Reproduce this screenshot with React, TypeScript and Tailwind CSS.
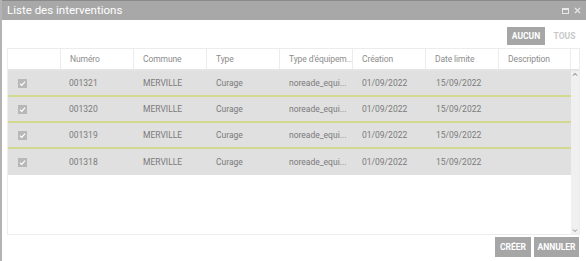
import { X } from "lucide-react";

const columns = [
  { key: "num", title: "Numéro", width: "w-[73px]" },
  { key: "commune", title: "Commune", width: "w-[73px]" },
  { key: "type", title: "Type", width: "w-[73px]" },
  { key: "equip", title: "Type d'équipem...", width: "w-[73px]" },
  { key: "creation", title: "Création", width: "w-[73px]" },
  { key: "limite", title: "Date limite", width: "w-[73px]" },
  { key: "desc", title: "Description", width: "w-[72px]" }
];

const rows = [
  { num: "001321", commune: "MERVILLE", type: "Curage", equip: "noreade_equi...", creation: "01/09/2022", limite: "15/09/2022", desc: "" },
  { num: "001320", commune: "MERVILLE", type: "Curage", equip: "noreade_equi...", creation: "01/09/2022", limite: "15/09/2022", desc: "" },
  { num: "001319", commune: "MERVILLE", type: "Curage", equip: "noreade_equi...", creation: "01/09/2022", limite: "15/09/2022", desc: "" },
  { num: "001318", commune: "MERVILLE", type: "Curage", equip: "noreade_equi...", creation: "01/09/2022", limite: "15/09/2022", desc: "" }
];

function CheckBox() {
  return (
    <span className="flex h-[9px] w-[9px] items-center justify-center bg-[#b8b8b8]">
      <svg width="7" height="7" viewBox="0 0 7 7" fill="none">
        <path d="M1 3.8 L2.8 5.4 L6 1.6" stroke="#fff" strokeWidth="1.2" />
      </svg>
    </span>
  );
}

export default function App() {
  return (
    <div className="flex h-[261px] w-[586px] flex-col border-l-2 border-[#b3b3b3] bg-white font-['Roboto','Liberation_Sans',sans-serif]">
      <div className="flex h-[20px] items-center justify-between border-t border-[#8a8a8a] bg-[#a8a8a8] pl-[5px] pr-[4px]">
        <span className="text-[11.5px] text-white">Liste des interventions</span>
        <div className="flex items-center gap-[4px] text-[#e8e8e8]">
          <span className="h-[6px] w-[7px] border border-t-2 border-[#e8e8e8]" />
          <X size={9} strokeWidth={3} />
        </div>
      </div>

      <div className="flex justify-end gap-[3px] pr-[5px] pt-[7px]">
        <button className="h-[18px] w-[38px] bg-[#a6a6a6] text-[8.5px] font-bold text-white">AUCUN</button>
        <button className="h-[18px] w-[33px] text-[8.5px] font-bold text-[#c8c8c8]">TOUS</button>
      </div>

      <div className="ml-[5px] mr-[6px] mt-[3px] flex h-[187px] flex-col border border-[#ececec]">
        <div className="flex h-[22px] border-b-2 border-[#e4e4e4]">
          <div className="w-[53px] border-r border-[#ececec]" />
          {columns.map(col => (
            <div
              key={col.key}
              className={`${col.width} flex items-center overflow-hidden whitespace-nowrap border-r border-[#ececec] pl-[9px] text-[8.5px] tracking-[-0.1px] text-[#8c8c8c]`}
            >
              {col.title}
            </div>
          ))}
          <div className="flex-1" />
        </div>
        <div className="flex flex-1">
          <div className="flex flex-1 flex-col">
            {rows.map((row, i) => (
              <div
                key={row.num}
                className={`flex h-[26px] items-center bg-[#e0e0e0] text-[8.5px] text-[#7a7a7a] ${i < rows.length - 1 ? "border-b-2 border-[#d3d98e]" : ""}`}
              >
                <div className="flex w-[53px] justify-start pl-[10px]">
                  <CheckBox />
                </div>
                <div className="w-[73px] pl-[8px]">{row.num}</div>
                <div className="w-[73px] pl-[9px]">{row.commune}</div>
                <div className="w-[73px] pl-[9px]">{row.type}</div>
                <div className="w-[73px] pl-[9px]">{row.equip}</div>
                <div className="w-[73px] pl-[9px]">{row.creation}</div>
                <div className="w-[73px] pl-[10px]">{row.limite}</div>
                <div className="w-[72px] pl-[9px]">{row.desc}</div>
              </div>
            ))}
          </div>
          <div className="flex w-[9px] flex-col items-center justify-between bg-[#f0f0f0] py-[1px] text-[#777]">
            <svg width="6" height="5" viewBox="0 0 6 5"><path d="M1 3.5 L3 1.5 L5 3.5" stroke="#666" strokeWidth="1" fill="none" /></svg>
            <svg width="6" height="5" viewBox="0 0 6 5"><path d="M1 1.5 L3 3.5 L5 1.5" stroke="#888" strokeWidth="1" fill="none" /></svg>
          </div>
        </div>
      </div>

      <div className="flex justify-end gap-[3px] pr-[7px] pt-[2px]">
        <button className="h-[20px] w-[36px] bg-[#a6a6a6] text-[8.5px] font-bold text-white">CRÉER</button>
        <button className="h-[20px] w-[45px] bg-[#a6a6a6] text-[8.5px] font-bold text-white">ANNULER</button>
      </div>
    </div>
  );
}
